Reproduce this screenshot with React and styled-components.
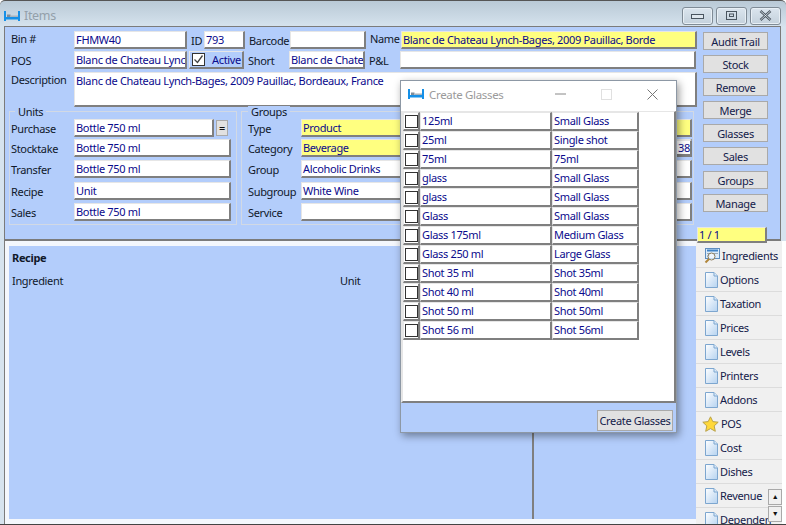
import React from 'react';
import styled, { createGlobalStyle } from 'styled-components';

const Global = createGlobalStyle`
  html, body { margin: 0; padding: 0; background: #fff; }
  body { font-family: "Noto Sans", "Liberation Sans", sans-serif; font-size: 11px; letter-spacing: -0.33px; color: #10182a; }
  * { box-sizing: border-box; }
`;

const PANEL = '#b3cdfb';
const INK = '#0a0a8c';

const Win = styled.div`
  width: 786px;
  height: 525px;
  position: relative;
  overflow: hidden;
  display: flex;
  flex-direction: column;
  background: linear-gradient(#b9c9d6, #d6e3ee 26px);
  border-top: 1px solid #555;
  border-bottom: 1px solid #444;
  border-radius: 5px 5px 0 0;
`;

const TitleBar = styled.div`
  height: 25px;
  flex: none;
  display: flex;
  align-items: center;
  padding: 4px 5px 0 4px;
`;

const TitleText = styled.span`
  font-size: 12.5px;
  color: #93a0aa;
  margin-left: 4px;
`;

const WinButtons = styled.div`
  margin-left: auto;
  display: flex;
  gap: 3px;
`;

const WinButton = styled.div`
  width: 31px;
  height: 18px;
  border: 1px solid #7f8b96;
  border-radius: 3px;
  background: linear-gradient(#dbe5ee, #c4d1dc);
  display: flex;
  align-items: center;
  justify-content: center;
  box-shadow: inset 0 0 0 1px #e8eff5;
`;

const Top = styled.div`
  height: 215px;
  flex: none;
  margin: 0 5px 0 4px;
  background: ${PANEL};
  border: 1px solid #7b7b7b;
  border-bottom: 2px solid #7b7b7b;
  display: flex;
  padding: 4px 0 0 4px;
`;

const FormCol = styled.div`
  width: 687px;
  flex: none;
  display: flex;
  flex-direction: column;
`;

const Row = styled.div`
  display: flex;
  align-items: ${(p) => (p.$tall ? 'flex-start' : 'center')};
  height: ${(p) => (p.$tall ? 35 : 18)}px;
  margin-bottom: ${(p) => p.$mb ?? 2}px;
  padding-left: 2px;
`;

const Label = styled.span`
  width: ${(p) => p.$w}px;
  flex: none;
  white-space: nowrap;
  padding-left: ${(p) => p.$pad ?? 0}px;
  padding-bottom: ${(p) => p.$up ?? 0}px;
`;

const Field = styled.div`
  width: ${(p) => p.$w}px;
  height: ${(p) => p.$h ?? 18}px;
  flex: none;
  background: ${(p) => (p.$yellow ? '#ffff80' : '#fff')};
  color: ${INK};
  border-style: solid;
  border-width: 1px 2px 2px 1px;
  border-color: #e6e6e6 #7f7f7f #7f7f7f #e6e6e6;
  padding: 0 1px;
  line-height: 15px;
  white-space: nowrap;
  overflow: hidden;
`;

const Check = styled.div`
  width: 55px;
  height: 18px;
  flex: none;
  margin-left: 2px;
  background: ${PANEL};
  border-style: solid;
  border-width: 1px 2px 2px 1px;
  border-color: #e6e6e6 #7f7f7f #7f7f7f #e6e6e6;
  display: flex;
  align-items: center;
  gap: 7px;
  padding-left: 2px;
  color: ${INK};
`;

const Box = styled.span`
  width: 13px;
  height: 13px;
  flex: none;
  background: #fff;
  border: 1px solid #333;
  display: flex;
  align-items: center;
  justify-content: center;
`;

const Groups = styled.div`
  display: flex;
  gap: 4px;
  margin-top: 4px;
`;

const Group = styled.div`
  width: ${(p) => p.$w}px;
  height: 114px;
  padding: 7px 0 0 1px;
  border: 1px solid #d2d9e4;
  position: relative;
`;

const Legend = styled.span`
  position: absolute;
  left: ${(p) => p.$left}px;
  top: -6px;
  padding: 0 3px;
  line-height: 11px;
  background: ${PANEL};
`;

const GroupRow = styled.div`
  display: flex;
  align-items: center;
  height: 18px;
  margin-bottom: ${(p) => p.$mb}px;
`;

const EqButton = styled.div`
  width: 12px;
  height: 16px;
  margin-left: 2px;
  background: #e1e1e1;
  border: 1px solid #a9a9a9;
  color: #111;
  line-height: 13px;
  text-align: center;
`;

const Buttons = styled.div`
  margin: 1px 0 0 7px;
  width: 65px;
  flex: none;
  display: flex;
  flex-direction: column;
`;

const SideButton = styled.div`
  height: 18px;
  margin-bottom: 5.1px;
  background: #e1e1e1;
  border: 1px solid #a9a9a9;
  text-align: center;
  line-height: 17px;
  color: #14204a;
`;

const Lower = styled.div`
  flex: 1;
  display: flex;
  margin-left: 4px;
  min-height: 0;
  border-left: 1px solid #7b7b7b;
  background: #fff;
`;

const RecipePane = styled.div`
  width: 691px;
  flex: none;
  background: ${PANEL};
  border-style: solid;
  border-width: 5px 0 5px 4px;
  border-color: #f4f7fc;
  display: flex;
`;

const RecipeMain = styled.div`
  width: 525px;
  flex: none;
  border-right: 2px solid #7f7f7f;
  padding: 4px 0 0 3px;
`;

const RecipeTitle = styled.div`
  font-weight: 700;
  margin-bottom: 8px;
`;

const Headers = styled.div`
  display: flex;
`;

const Tabs = styled.div`
  width: 86px;
  flex: none;
  position: relative;
  background: #f0f0f0;
  overflow: hidden;
  padding-top: 3px;
`;

const Tab = styled.div`
  height: 24px;
  border-bottom: 1px solid #dcdcdc;
  display: flex;
  align-items: center;
  padding-left: 9px;
  gap: 2px;
  color: #14204a;
  white-space: nowrap;
`;

const Scroll = styled.div`
  position: absolute;
  right: 0;
  width: 14px;
  height: 16px;
  top: ${(p) => p.$top}px;
  background: #f0f0f0;
  border: 1px solid #a9a9a9;
  font-size: 7px;
  line-height: 14px;
  text-align: center;
  color: #111;
`;

const Pager = styled.div`
  position: absolute;
  left: 697px;
  top: 226px;
  width: 70px;
  height: 16px;
  background: #ffff80;
  border-style: solid;
  border-width: 1px 2px 2px 1px;
  border-color: #e6e6e6 #7f7f7f #7f7f7f #e6e6e6;
  color: ${INK};
  padding-left: 1px;
  line-height: 13px;
  z-index: 1;
`;

const Stub = styled.div`
  position: absolute;
  left: 676px;
  top: 139px;
  width: 16px;
  height: 16px;
  background: #fff;
  border-style: solid;
  border-width: 1px 2px 2px 1px;
  border-color: #e6e6e6 #7f7f7f #7f7f7f #e6e6e6;
  color: ${INK};
  line-height: 13px;
  text-align: right;
`;

const Dialog = styled.div`
  position: absolute;
  left: 400px;
  top: 79px;
  width: 277px;
  height: 353px;
  background: ${PANEL};
  border: 1px solid #8d98a5;
  box-shadow: 2px 3px 8px rgba(0, 0, 0, 0.4);
  display: flex;
  flex-direction: column;
  z-index: 2;
`;

const DialogTitle = styled.div`
  height: 30px;
  flex: none;
  background: #fff;
  display: flex;
  align-items: center;
  padding: 0 0 4px 7px;
`;

const DialogText = styled.span`
  color: #9a9a9a;
  font-size: 11.5px;
  margin-left: 5px;
`;

const DialogCtrls = styled.div`
  margin-left: auto;
  display: flex;
  align-items: center;
  gap: 35px;
  padding-right: 18px;
`;

const ListArea = styled.div`
  height: 292px;
  flex: none;
  background: #fff;
  border-style: solid;
  border-width: 1px 2px 2px 2px;
  border-color: #e6e6e6 #7f7f7f #7f7f7f #e6e6e6;
`;

const ListRow = styled.div`
  display: flex;
  height: 19px;
`;

const CheckCell = styled.div`
  width: 17px;
  height: 19px;
  flex: none;
  border-style: solid;
  border-width: 1px 2px 2px 1px;
  border-color: #e6e6e6 #7f7f7f #7f7f7f #e6e6e6;
  display: flex;
  align-items: center;
  justify-content: center;
`;

const Cell = styled.div`
  width: ${(p) => p.$w}px;
  height: 19px;
  flex: none;
  color: ${INK};
  padding-left: 1px;
  line-height: 16px;
  border-style: solid;
  border-width: 1px 2px 2px 1px;
  border-color: #e6e6e6 #7f7f7f #7f7f7f #e6e6e6;
`;

const DialogFoot = styled.div`
  flex: 1;
  display: flex;
  justify-content: flex-end;
  align-items: flex-end;
  padding: 0 3px 1px 0;
`;

const FootButton = styled(SideButton)`
  width: 76px;
  height: 21px;
  margin: 0;
  line-height: 20px;
  white-space: nowrap;
`;

const Bed = () => (
  <svg width="16" height="10" viewBox="0 0 16 10">
    <path d="M1 0v10M15 0v10" stroke="#1590e8" strokeWidth="2" />
    <path d="M1 6h14v2.500H1z" fill="#1590e8" />
    <path d="M3 3.500h3.500V6H3z" fill="#7f8c99" />
    <path d="M6.500 4.500H14V6H6.500z" fill="#a9b4be" />
  </svg>
);

const Doc = () => (
  <svg width="13" height="16" viewBox="0 0 13 16">
    <defs>
      <linearGradient id="docFill" x1="0" y1="0" x2="1" y2="1">
        <stop offset="0" stopColor="#fff" />
        <stop offset="1" stopColor="#b5d2f0" />
      </linearGradient>
    </defs>
    <path d="M.5.500h8.500l3.500 3.500v11.500H.5z" fill="url(#docFill)" stroke="#7da6cf" />
    <path d="M9 .5V4h3.500" fill="#dbeafa" stroke="#7da6cf" />
  </svg>
);

const Star = () => (
  <svg width="17" height="16" viewBox="0 0 17 16" style={{ marginLeft: -3 }}>
    <path d="M8.500.8l2.300 4.800 5.400.6-4 3.700 1.100 5.400-4.800-2.700-4.800 2.700 1.100-5.400-4-3.700 5.400-.6z" fill="#ffd83a" stroke="#b9a24a" />
  </svg>
);

const Lens = () => (
  <svg width="16" height="16" viewBox="0 0 16 16" style={{ marginLeft: -1 }}>
    <rect x="1.500" y="0.500" width="14" height="10" fill="#dcecfa" stroke="#5d8dbf" />
    <path d="M3 2.500h11" stroke="#3f83c7" strokeWidth="2" />
    <path d="M3 5.500h4M3 8h3M10 5.500h4" stroke="#99aabb" />
    <circle cx="7.500" cy="8.500" r="3.500" fill="#f5fbff" fillOpacity="0.7" stroke="#8a7a5a" />
    <path d="M5 11L1.500 14.500" stroke="#b0863a" strokeWidth="2" />
  </svg>
);

const Tick = () => (
  <svg width="11" height="11" viewBox="0 0 11 11">
    <path d="M1.500 5.500l3 3 5-7" fill="none" stroke="#444" strokeWidth="1.300" />
  </svg>
);

const rowGaps = [2, 3, 4, 3, 0];

const units = [
  ['Purchase', 'Bottle 750 ml'],
  ['Stocktake', 'Bottle 750 ml'],
  ['Transfer', 'Bottle 750 ml'],
  ['Recipe', 'Unit'],
  ['Sales', 'Bottle 750 ml'],
];

const groups = [
  ['Type', 'Product', true],
  ['Category', 'Beverage', true],
  ['Group', 'Alcoholic Drinks'],
  ['Subgroup', 'White Wine'],
  ['Service', ''],
];

const actions = ['Audit Trail', 'Stock', 'Remove', 'Merge', 'Glasses', 'Sales', 'Groups', 'Manage'];

const glasses = [
  ['125ml', 'Small Glass'],
  ['25ml', 'Single shot'],
  ['75ml', '75ml'],
  ['glass', 'Small Glass'],
  ['glass', 'Small Glass'],
  ['Glass', 'Small Glass'],
  ['Glass 175ml', 'Medium Glass'],
  ['Glass 250 ml', 'Large Glass'],
  ['Shot 35 ml', 'Shot 35ml'],
  ['Shot 40 ml', 'Shot 40ml'],
  ['Shot 50 ml', 'Shot 50ml'],
  ['Shot 56 ml', 'Shot 56ml'],
];

const tabs = ['Ingredients', 'Options', 'Taxation', 'Prices', 'Levels', 'Printers', 'Addons', 'POS', 'Cost', 'Dishes', 'Revenue', 'Dependen'];

const tabIcon = (name) => {
  if (name === 'Ingredients') return <Lens />;
  if (name === 'POS') return <Star />;
  return <Doc />;
};

export default function App() {
  return (
    <>
      <Global />
      <Win>
        <TitleBar>
          <Bed />
          <TitleText>Items</TitleText>
          <WinButtons>
            <WinButton>
              <svg width="13" height="7" viewBox="0 0 13 7"><rect x="0.500" y="2.500" width="12" height="4" fill="#dfe7ee" stroke="#4a5560" /></svg>
            </WinButton>
            <WinButton>
              <svg width="11" height="9" viewBox="0 0 11 9"><rect x="0.500" y="0.500" width="10" height="8" fill="none" stroke="#4a5560" /><rect x="3.500" y="3" width="4" height="2.500" fill="none" stroke="#4a5560" /></svg>
            </WinButton>
            <WinButton>
              <svg width="13" height="11" viewBox="0 0 13 11"><path d="M1.500 1L11.500 10M11.500 1L1.500 10" stroke="#4a5560" strokeWidth="2.500" /><path d="M1.500 1L11.500 10M11.500 1L1.500 10" stroke="#e6edf3" strokeWidth="0.800" /></svg>
            </WinButton>
          </WinButtons>
        </TitleBar>

        <Top>
          <FormCol>
            <Row>
              <Label $w={63} $up={4}>Bin #</Label>
              <Field $w={113}>FHMW40</Field>
              <Label $w={17} $pad={4}>ID</Label>
              <Field $w={41}>793</Field>
              <Label $w={45} $pad={4}>Barcode</Label>
              <Field $w={76} />
              <Label $w={35} $pad={4} $up={4}>Name</Label>
              <Field $w={296} $yellow>Blanc de Chateau Lynch-Bages, 2009 Pauillac, Borde</Field>
            </Row>
            <Row $mb={3}>
              <Label $w={63}>POS</Label>
              <Field $w={113}>Blanc de Chateau Lync</Field>
              <Check>
                <Box><Tick /></Box>
                Active
              </Check>
              <Label $w={45} $pad={4}>Short</Label>
              <Field $w={76}>Blanc de Chate</Field>
              <Label $w={35} $pad={4}>P&amp;L</Label>
              <Field $w={296} />
            </Row>
            <Row $tall $mb={0}>
              <Label $w={63}>Description</Label>
              <Field $w={623} $h={35}>Blanc de Chateau Lynch-Bages, 2009 Pauillac, Bordeaux, France</Field>
            </Row>
            <Groups>
              <Group $w={228}>
                <Legend $left={5}>Units</Legend>
                {units.map(([label, value], i) => (
                  <GroupRow key={label} $mb={rowGaps[i]}>
                    <Label $w={63}>{label}</Label>
                    <Field $w={i === 0 ? 140 : 157}>{value}</Field>
                    {i === 0 && <EqButton>=</EqButton>}
                  </GroupRow>
                ))}
              </Group>
              <Group $w={453}>
                <Legend $left={6}>Groups</Legend>
                {groups.map(([label, value, yellow], i) => (
                  <GroupRow key={label} $mb={rowGaps[i]}>
                    <Label $w={58} $pad={5}>{label}</Label>
                    <Field $w={391} $yellow={yellow}>{value}</Field>
                  </GroupRow>
                ))}
              </Group>
            </Groups>
          </FormCol>
          <Buttons>
            {actions.map((a) => (
              <SideButton key={a}>{a}</SideButton>
            ))}
          </Buttons>
        </Top>

        <Lower>
          <RecipePane>
            <RecipeMain>
              <RecipeTitle>Recipe</RecipeTitle>
              <Headers>
                <Label $w={328}>Ingredient</Label>
                <Label $w={60}>Unit</Label>
              </Headers>
            </RecipeMain>
          </RecipePane>
          <Tabs>
            {tabs.map((t) => (
              <Tab key={t}>
                {tabIcon(t)}
                {t}
              </Tab>
            ))}
            <Scroll $top={248}>▲</Scroll>
            <Scroll $top={265}>▼</Scroll>
          </Tabs>
        </Lower>

        <Stub>38</Stub>
        <Pager>1 / 1</Pager>

        <Dialog>
          <DialogTitle>
            <Bed />
            <DialogText>Create Glasses</DialogText>
            <DialogCtrls>
              <svg width="11" height="2" viewBox="0 0 11 2"><path d="M0 1h11" stroke="#888" /></svg>
              <svg width="11" height="11" viewBox="0 0 11 11"><rect x="0.500" y="0.500" width="10" height="10" fill="none" stroke="#e0e0e0" /></svg>
              <svg width="11" height="11" viewBox="0 0 11 11"><path d="M.5.5l10 10M10.500.5l-10 10" stroke="#777" /></svg>
            </DialogCtrls>
          </DialogTitle>
          <ListArea>
            {glasses.map(([a, b], i) => (
              <ListRow key={i}>
                <CheckCell><Box /></CheckCell>
                <Cell $w={132}>{a}</Cell>
                <Cell $w={87}>{b}</Cell>
              </ListRow>
            ))}
          </ListArea>
          <DialogFoot>
            <FootButton>Create Glasses</FootButton>
          </DialogFoot>
        </Dialog>
      </Win>
    </>
  );
}
